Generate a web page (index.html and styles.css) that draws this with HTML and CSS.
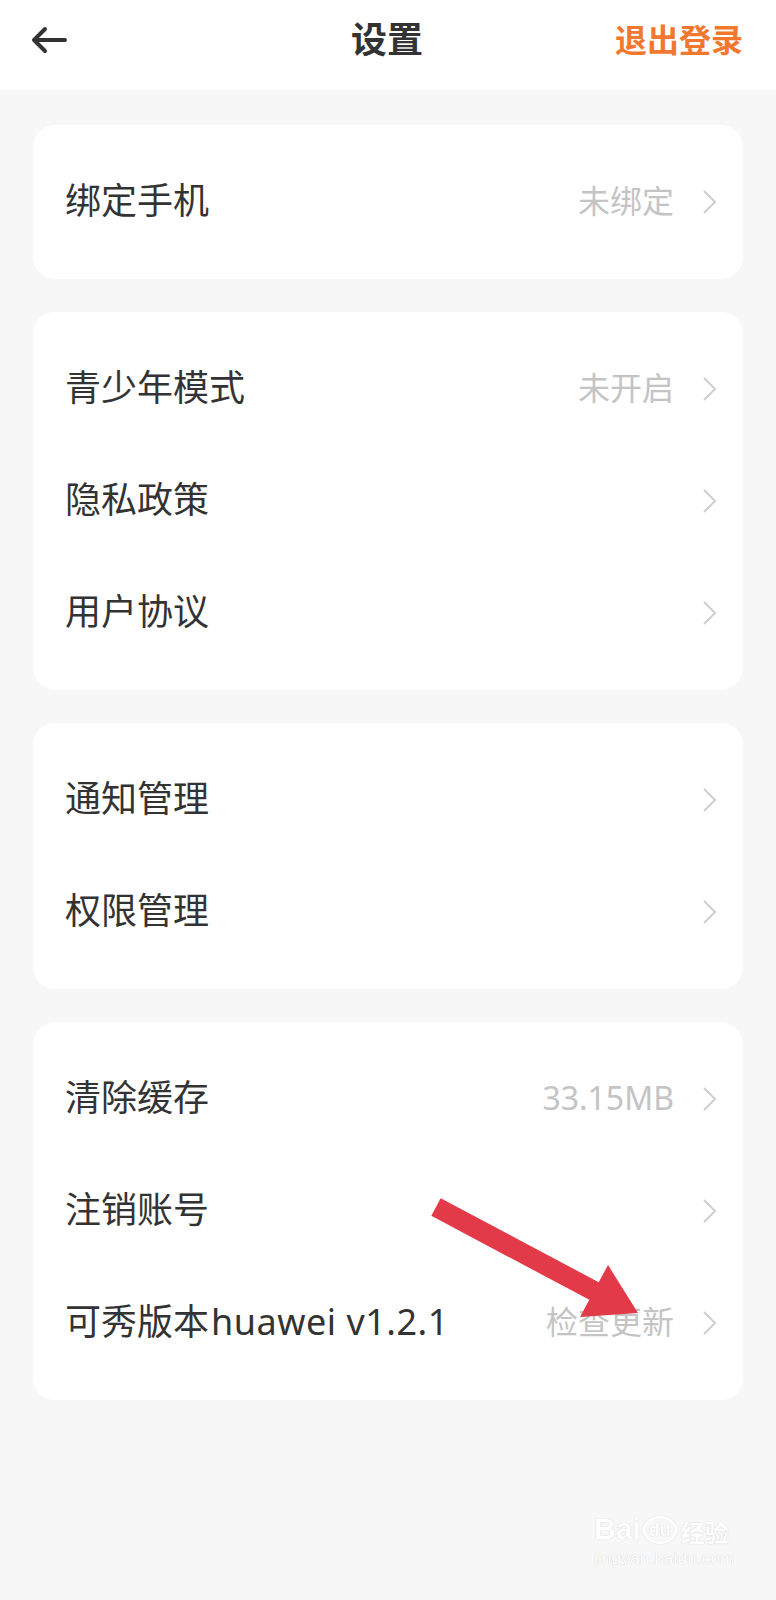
FILE: index.html
```html
<!DOCTYPE html>
<html lang="zh-CN">
<head>
<meta charset="utf-8">
<title>设置</title>
<link rel="stylesheet" href="styles.css">
</head>
<body>
<div class="page">
  <header class="topbar">
    <div class="back">
      <svg width="36" height="28" viewBox="0 0 36 28"><path d="M34 14H4M14 3L3 14l11 11" fill="none" stroke="#333" stroke-width="4" stroke-linecap="round" stroke-linejoin="round"/></svg>
    </div>
    <div class="title">设置</div>
    <div class="logout">退出登录</div>
  </header>

  <main class="content">
    <section class="card">
      <div class="row"><span class="label">绑定手机</span><span class="value">未绑定</span><svg class="chev" width="15" height="26" viewBox="0 0 15 26"><polyline points="2,2 13,13 2,24" fill="none" stroke="#cfcfcf" stroke-width="2"/></svg></div>
    </section>

    <section class="card">
      <div class="row"><span class="label">青少年模式</span><span class="value">未开启</span><svg class="chev" width="15" height="26" viewBox="0 0 15 26"><polyline points="2,2 13,13 2,24" fill="none" stroke="#cfcfcf" stroke-width="2"/></svg></div>
      <div class="row"><span class="label">隐私政策</span><svg class="chev" width="15" height="26" viewBox="0 0 15 26"><polyline points="2,2 13,13 2,24" fill="none" stroke="#cfcfcf" stroke-width="2"/></svg></div>
      <div class="row"><span class="label">用户协议</span><svg class="chev" width="15" height="26" viewBox="0 0 15 26"><polyline points="2,2 13,13 2,24" fill="none" stroke="#cfcfcf" stroke-width="2"/></svg></div>
    </section>

    <section class="card">
      <div class="row"><span class="label">通知管理</span><svg class="chev" width="15" height="26" viewBox="0 0 15 26"><polyline points="2,2 13,13 2,24" fill="none" stroke="#cfcfcf" stroke-width="2"/></svg></div>
      <div class="row"><span class="label">权限管理</span><svg class="chev" width="15" height="26" viewBox="0 0 15 26"><polyline points="2,2 13,13 2,24" fill="none" stroke="#cfcfcf" stroke-width="2"/></svg></div>
    </section>

    <section class="card">
      <div class="row"><span class="label">清除缓存</span><span class="value">33.15MB</span><svg class="chev" width="15" height="26" viewBox="0 0 15 26"><polyline points="2,2 13,13 2,24" fill="none" stroke="#cfcfcf" stroke-width="2"/></svg></div>
      <div class="row"><span class="label">注销账号</span><svg class="chev" width="15" height="26" viewBox="0 0 15 26"><polyline points="2,2 13,13 2,24" fill="none" stroke="#cfcfcf" stroke-width="2"/></svg></div>
      <div class="row"><span class="label">可秀版本<span class="latin">huawei v1.2.1</span></span><span class="value">检查更新</span><svg class="chev" width="15" height="26" viewBox="0 0 15 26"><polyline points="2,2 13,13 2,24" fill="none" stroke="#cfcfcf" stroke-width="2"/></svg></div>
    </section>
  </main>

  <svg class="annot" width="776" height="1600" viewBox="0 0 776 1600">
    <polygon points="440.7,1198.2 598.7,1282.2 608,1265 638,1313 580,1317 589.3,1299.8 431.3,1215.8" fill="#e23a48"/>
  </svg>

  <div class="watermark">
    <div class="wm-top"><span class="wm-bai">Bai</span><span class="wm-paw">du</span><span class="wm-cn">经验</span></div>
    <div class="wm-url">jingyan.baidu.com</div>
  </div>
</div>
</body>
</html>
```

FILE: styles.css
```css
html, body {
  margin: 0;
  padding: 0;
  background: #f7f7f7;
}

body {
  font-family: "Noto Sans", "Noto Sans CJK SC", sans-serif;
  color: #333;
}

.page {
  position: relative;
  width: 776px;
  min-height: 1600px;
  background: #f7f7f7;
}

.topbar {
  height: 90px;
  background: #fff;
  display: flex;
  align-items: center;
  justify-content: space-between;
  padding: 0 33px 0 31px;
  box-sizing: border-box;
  position: relative;
}

.back {
  display: flex;
  align-items: center;
  width: 140px;
  margin-top: -10px;
}

.title {
  font-size: 36px;
  font-weight: 700;
  color: #333;
  line-height: 1;
  margin-top: -10px;
}

.logout {
  width: 140px;
  text-align: right;
  font-size: 32px;
  font-weight: 700;
  color: #f2782f;
  line-height: 1;
  margin-top: -10px;
}

.content {
  padding: 35px 33px 0 33px;
  display: flex;
  flex-direction: column;
  gap: 33px;
}

.card {
  background: #fff;
  border-radius: 22px;
  padding: 21px 26px 21px 32px;
  display: flex;
  flex-direction: column;
}

.row {
  height: 112px;
  display: flex;
  align-items: center;
}

.label {
  flex: 1;
  font-size: 36px;
  color: #333;
  line-height: 1;
  margin-top: -3px;
}

.latin {
  letter-spacing: 0.5px;
  margin-left: 2px;
}

.value {
  font-size: 32px;
  color: #c4c4c4;
  line-height: 1;
  margin-right: 28px;
  margin-top: -3px;
}

.chev {
  display: block;
  flex: none;
}

.annot {
  position: absolute;
  left: 0;
  top: 0;
  pointer-events: none;
}

.watermark {
  position: absolute;
  left: 594px;
  top: 1514px;
  color: #fff;
  text-shadow: 0 0 1px rgba(0,0,0,0.22);
  font-family: "Liberation Sans", sans-serif;
  line-height: 1;
}

.wm-top {
  display: flex;
  align-items: flex-end;
  gap: 2px;
}

.wm-bai {
  font-size: 30px;
  font-weight: 700;
}

.wm-paw {
  font-size: 18px;
  font-weight: 700;
  border: 2px solid #fff;
  border-radius: 50%;
  padding: 3px 4px;
  box-shadow: 0 0 1px rgba(0,0,0,0.25);
}

.wm-cn {
  font-family: "Noto Sans CJK SC", sans-serif;
  font-size: 24px;
  font-weight: 700;
  margin-left: 2px;
}

.wm-url {
  font-size: 17px;
  margin-top: 6px;
  letter-spacing: 0.2px;
}
```
